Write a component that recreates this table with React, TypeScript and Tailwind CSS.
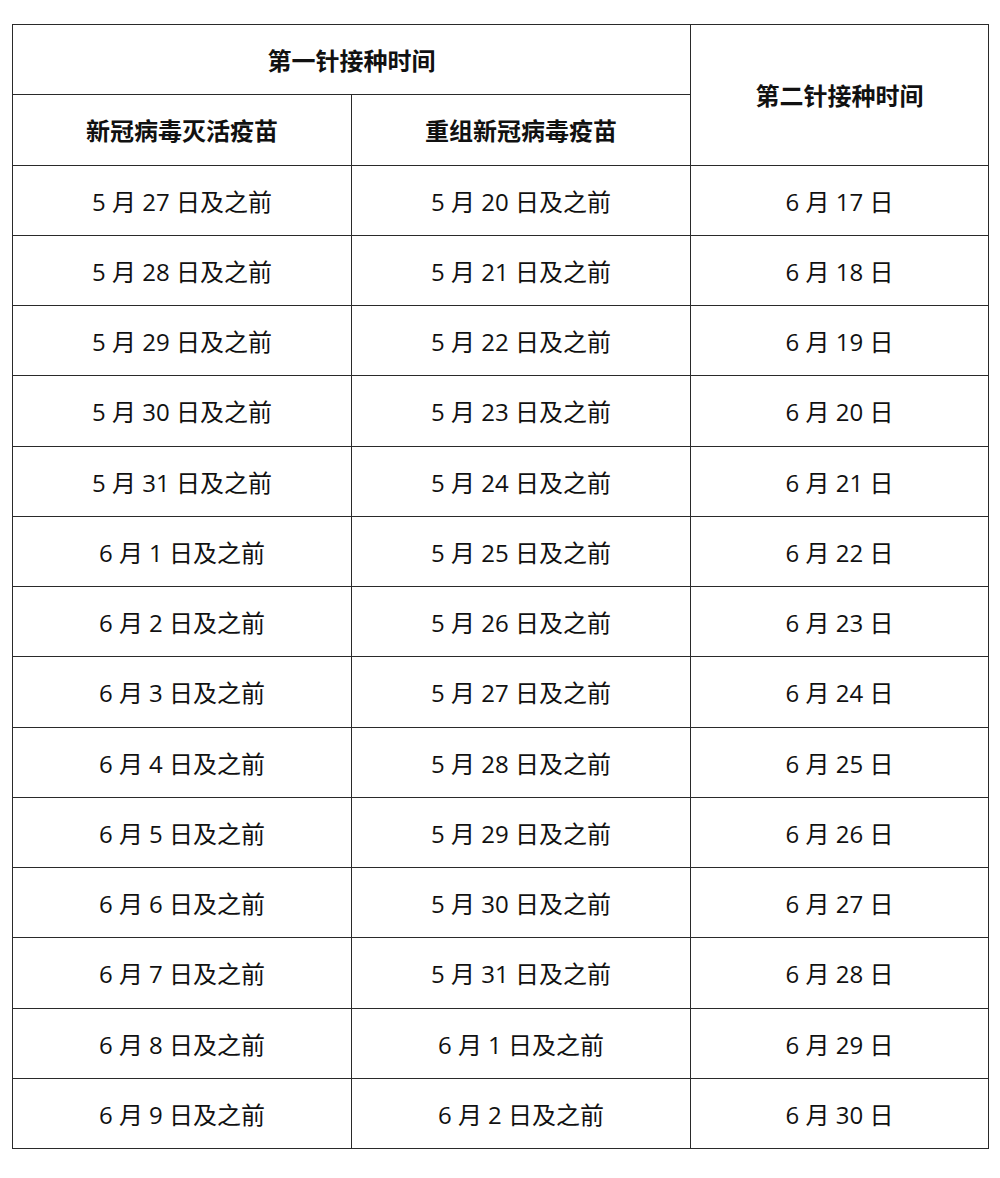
const rows: [string, string, string][] = [
  ['5 月 27 日及之前', '5 月 20 日及之前', '6 月 17 日'],
  ['5 月 28 日及之前', '5 月 21 日及之前', '6 月 18 日'],
  ['5 月 29 日及之前', '5 月 22 日及之前', '6 月 19 日'],
  ['5 月 30 日及之前', '5 月 23 日及之前', '6 月 20 日'],
  ['5 月 31 日及之前', '5 月 24 日及之前', '6 月 21 日'],
  ['6 月 1 日及之前', '5 月 25 日及之前', '6 月 22 日'],
  ['6 月 2 日及之前', '5 月 26 日及之前', '6 月 23 日'],
  ['6 月 3 日及之前', '5 月 27 日及之前', '6 月 24 日'],
  ['6 月 4 日及之前', '5 月 28 日及之前', '6 月 25 日'],
  ['6 月 5 日及之前', '5 月 29 日及之前', '6 月 26 日'],
  ['6 月 6 日及之前', '5 月 30 日及之前', '6 月 27 日'],
  ['6 月 7 日及之前', '5 月 31 日及之前', '6 月 28 日'],
  ['6 月 8 日及之前', '6 月 1 日及之前', '6 月 29 日'],
  ['6 月 9 日及之前', '6 月 2 日及之前', '6 月 30 日'],
];

const cell = 'border border-[#2a2a2a] text-center align-middle pt-[3px]';

export default function App() {
  return (
    <div
      className="min-h-[1178px] bg-white pt-[24px] pl-[12px] text-[#111111]"
      style={{ fontFamily: '"Open Sans", "Noto Sans CJK SC", sans-serif' }}
    >
      <table className="w-[976px] border-collapse table-fixed text-[24px] leading-none">
        <colgroup>
          <col className="w-[339px]" />
          <col className="w-[339px]" />
          <col className="w-[298px]" />
        </colgroup>
        <thead>
          <tr className="h-[70.25px]">
            <th colSpan={2} className={`${cell} font-bold`}>第一针接种时间</th>
            <th rowSpan={2} className={`${cell} font-bold`}>第二针接种时间</th>
          </tr>
          <tr className="h-[70.25px]">
            <th className={`${cell} font-bold`}>新冠病毒灭活疫苗</th>
            <th className={`${cell} font-bold`}>重组新冠病毒疫苗</th>
          </tr>
        </thead>
        <tbody>
          {rows.map((r, i) => (
            <tr key={i} className="h-[70.25px]">
              <td className={cell}>{r[0]}</td>
              <td className={cell}>{r[1]}</td>
              <td className={cell}>{r[2]}</td>
            </tr>
          ))}
        </tbody>
      </table>
    </div>
  );
}
